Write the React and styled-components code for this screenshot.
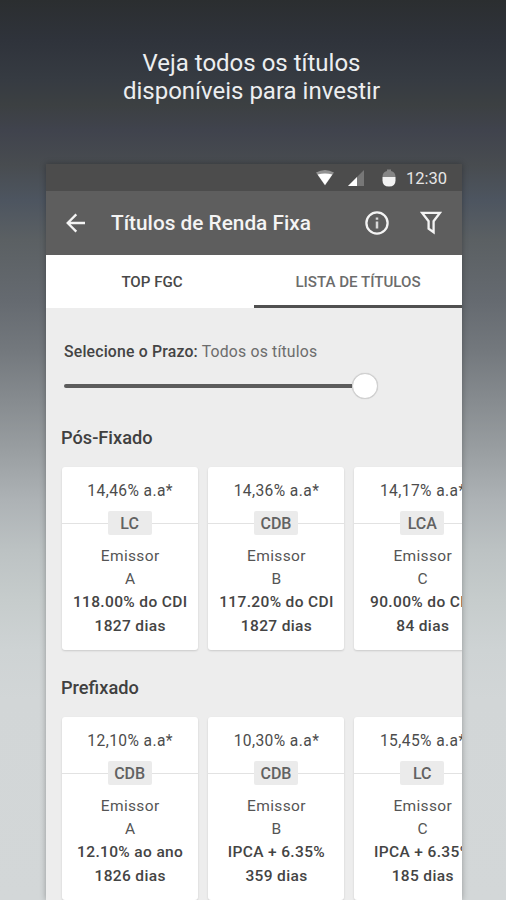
import React from "react";
import styled, { createGlobalStyle } from "styled-components";

const posFixado = [
  { taxa: "14,46% a.a*", tipo: "LC", emissor: "A", rende: "118.00% do CDI", prazo: "1827 dias" },
  { taxa: "14,36% a.a*", tipo: "CDB", emissor: "B", rende: "117.20% do CDI", prazo: "1827 dias" },
  { taxa: "14,17% a.a*", tipo: "LCA", emissor: "C", rende: "90.00% do CDI", prazo: "84 dias" },
];

const prefixado = [
  { taxa: "12,10% a.a*", tipo: "CDB", emissor: "A", rende: "12.10% ao ano", prazo: "1826 dias" },
  { taxa: "10,30% a.a*", tipo: "CDB", emissor: "B", rende: "IPCA + 6.35%", prazo: "359 dias" },
  { taxa: "15,45% a.a*", tipo: "LC", emissor: "C", rende: "IPCA + 6.35%", prazo: "185 dias" },
];

const Lista = ({ nome, titulos }) => (
  <Secao>
    <SecaoTitulo>{nome}</SecaoTitulo>
    <Cards>
      {titulos.map((t) => (
        <Card key={t.emissor}>
          <Taxa>{t.taxa}</Taxa>
          <Divisor>
            <Tipo>{t.tipo}</Tipo>
          </Divisor>
          <Linha>Emissor</Linha>
          <Linha>{t.emissor}</Linha>
          <Linha $forte>{t.rende}</Linha>
          <Linha $forte>{t.prazo}</Linha>
        </Card>
      ))}
    </Cards>
  </Secao>
);

export default function App() {
  return (
    <>
      <GlobalStyle />
      <Page>
        <Headline>
          Veja todos os títulos
          <br />
          disponíveis para investir
        </Headline>
        <Phone>
          <StatusBar>
            <svg width="20" height="18" viewBox="0 0 20 18">
              <path d="M1 3.5Q10 -1.5 19 3.5L10 16.5Z" fill="#929292" />
              <path d="M2.6 5.4Q10 3.6 17.4 5.4L10 16Z" fill="#fff" />
            </svg>
            <Sinal width="18" height="18" viewBox="0 0 18 18">
              <path d="M17 1V17H1Z" fill="#777" />
              <path d="M10 8V17H1Z" fill="#fff" />
            </Sinal>
            <Bateria width="14" height="18" viewBox="0 0 14 18">
              <path d="M5 0.5H9V2Q13.5 3 13.5 8H0.5Q0.5 3 5 2Z" fill="#858585" />
              <path d="M0.5 8H13.5V11.5Q13.5 17.5 7 17.5Q0.5 17.5 0.5 11.5Z" fill="#f2f2f2" />
            </Bateria>
            <Hora>12:30</Hora>
          </StatusBar>
          <AppBar>
            <svg width="20" height="20" viewBox="0 0 20 20" fill="none" stroke="#f4f4f4" strokeWidth="2.3">
              <path d="M19 10H2M10.3 1.4L1.7 10L10.3 18.6" />
            </svg>
            <Titulo>Títulos de Renda Fixa</Titulo>
            <svg width="24" height="24" viewBox="0 0 24 24" fill="none" stroke="#f4f4f4">
              <circle cx="12" cy="12" r="10.6" strokeWidth="2.3" />
              <path d="M12 10.5V17.4M12 6.4V8.8" strokeWidth="2.5" stroke="#d8d8d8" />
            </svg>
            <Filtro width="22" height="24" viewBox="0 0 22 24" fill="none" stroke="#f4f4f4" strokeWidth="2.3">
              <path d="M2 1.8H20L13.6 10.2V21.2L8.6 17.6V10.2Z" />
            </Filtro>
          </AppBar>
          <Tabs>
            <Tab>TOP FGC</Tab>
            <Tab $ativa>LISTA DE TÍTULOS</Tab>
          </Tabs>
          <Prazo>
            <span>Selecione o Prazo:</span> Todos os títulos
          </Prazo>
          <Slider>
            <Trilho />
            <Botao />
          </Slider>
          <Lista nome="Pós-Fixado" titulos={posFixado} />
          <Lista nome="Prefixado" titulos={prefixado} />
        </Phone>
      </Page>
    </>
  );
}

const GlobalStyle = createGlobalStyle`
  * {
    box-sizing: border-box;
  }
  body {
    margin: 0;
    font-family: Roboto, "Liberation Sans", sans-serif;
  }
`;

const Page = styled.div`
  display: flex;
  flex-direction: column;
  width: 506px;
  height: 900px;
  padding: 49px 44px 0 46px;
  overflow: hidden;
  background: linear-gradient(
    #2b2e30 0px,
    #2f333b 40px,
    #363b42 80px,
    #3c4042 105px,
    #40434d 130px,
    #484c50 165px,
    #4d5560 200px,
    #5b6063 240px,
    #656a70 300px,
    #73787d 350px,
    #868b8f 400px,
    #999ea1 450px,
    #adb2b5 500px,
    #bcc2c3 550px,
    #c6cccc 600px,
    #ced3d4 650px,
    #d2d6d7 700px,
    #d3d7d8 900px
  );
`;

const Headline = styled.h1`
  height: 115px;
  margin: 0 0 0 -5px;
  font-size: 24px;
  font-weight: 400;
  line-height: 28px;
  text-align: center;
  white-space: nowrap;
  color: #eceef0;
`;

const Phone = styled.div`
  width: 416px;
  height: 736px;
  overflow: hidden;
  background-color: #ededed;
  box-shadow: 0 0 6px rgba(0, 0, 0, 0.3);
`;

const StatusBar = styled.div`
  display: flex;
  align-items: center;
  justify-content: flex-end;
  height: 27px;
  padding: 1px 15px 0 0;
  background-color: #4c4c4c;
`;

const Sinal = styled.svg`
  margin-left: 12px;
`;

const Bateria = styled.svg`
  margin-left: 17px;
`;

const Hora = styled.div`
  margin-left: 10px;
  font-size: 16.5px;
  color: #e6e6e6;
`;

const AppBar = styled.div`
  display: flex;
  align-items: center;
  height: 64px;
  padding: 0 20px 1px;
  background-color: #5e5e5e;
`;

const Titulo = styled.div`
  flex: 1;
  margin-left: 25px;
  padding-top: 1px;
  font-size: 20.8px;
  font-weight: 500;
  white-space: nowrap;
  color: #f4f4f4;
`;

const Filtro = styled.svg`
  margin-left: 31px;
`;

const Tabs = styled.div`
  display: grid;
  grid-template-columns: 1fr 1fr;
  height: 53px;
  background-color: #fff;
`;

const Tab = styled.div`
  display: flex;
  align-items: center;
  justify-content: center;
  padding-left: ${(props) => (props.$ativa ? "0" : "4px")};
  padding-top: ${(props) => (props.$ativa ? "4px" : "1px")};
  font-size: 15.1px;
  font-weight: 500;
  color: ${(props) => (props.$ativa ? "#6c6c6c" : "#484848")};
  border-bottom: ${(props) => (props.$ativa ? "3px solid #505050" : "none")};
`;

const Prazo = styled.div`
  margin: 34px 0 0 18px;
  font-size: 15.8px;
  letter-spacing: 0.18px;
  line-height: 20px;
  color: #6c6c6c;

  span {
    color: #444;
    font-weight: 500;
  }
`;

const Slider = styled.div`
  display: flex;
  align-items: center;
  height: 26px;
  margin: 11px 0 0 18px;
`;

const Trilho = styled.div`
  width: 288px;
  height: 4px;
  border-radius: 2px 0 0 2px;
  background-color: #5c5c5c;
`;

const Botao = styled.div`
  width: 26px;
  height: 26px;
  border: 1px solid #cfcfcf;
  border-radius: 50%;
  background-color: #fff;
  box-shadow: 0 0 1px rgba(0, 0, 0, 0.2);
`;

const Secao = styled.div`
  height: 250px;
  padding: 27px 0 0 15px;
`;

const SecaoTitulo = styled.div`
  font-size: 18.2px;
  font-weight: 500;
  line-height: 24px;
  color: #404040;
`;

const Cards = styled.div`
  display: flex;
  gap: 10px;
  margin: 17px 0 0 0.5px;
`;

const Card = styled.div`
  flex: 0 0 136.3px;
  height: 183px;
  padding-top: 13px;
  border-radius: 3px;
  background-color: #fff;
  box-shadow: 0 1px 2px rgba(0, 0, 0, 0.15);
  text-align: center;
`;

const Taxa = styled.div`
  padding-left: 1px;
  font-size: 15.6px;
  letter-spacing: 0.4px;
  line-height: 22px;
  color: #4c4c4c;
`;

const Divisor = styled.div`
  display: flex;
  align-items: center;
  height: 24px;
  margin: 9px 0 10px;

  &::before,
  &::after {
    content: "";
    flex: 1;
    height: 1px;
    background-color: #e2e2e2;
  }
`;

const Tipo = styled.div`
  width: 44px;
  border-radius: 2px;
  font-size: 16px;
  font-weight: 500;
  line-height: 25px;
  height: 24px;
  color: #626262;
  background-color: #ebebeb;
`;

const Linha = styled.div`
  padding-left: 1px;
  font-size: 15.5px;
  font-weight: ${(props) => (props.$forte ? 500 : 400)};
  letter-spacing: 0.35px;
  line-height: 23.2px;
  white-space: nowrap;
  color: ${(props) => (props.$forte ? "#444" : "#555")};
`;
